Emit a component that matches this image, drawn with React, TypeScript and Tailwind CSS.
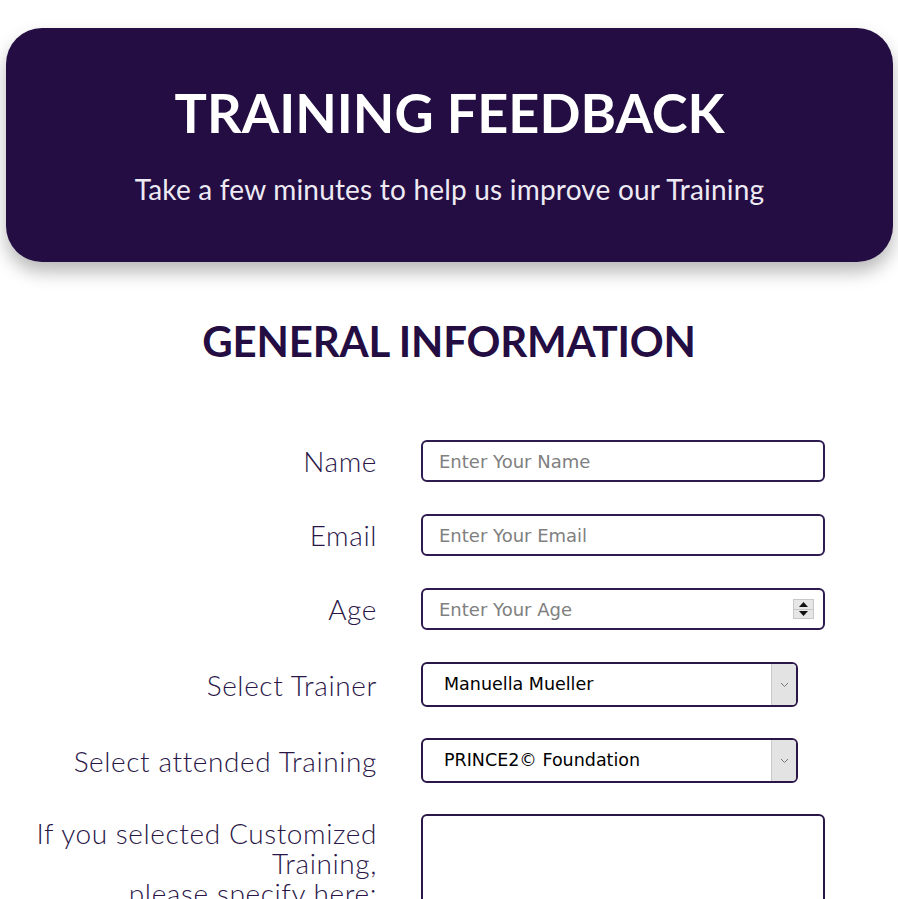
import React from 'react';

const LABEL_FONT = "font-['Lato','Noto_Sans',sans-serif]";
const FIELD_FONT = "font-['DejaVu_Sans','Liberation_Sans',sans-serif]";

function Row({ label, children, top = false }: { label: React.ReactNode; children: React.ReactNode; top?: boolean }) {
  return (
    <div className={`flex ${top ? 'items-start' : 'items-center'}`}>
      <div className={`w-[377px] text-right text-[28px] leading-[30px] font-light tracking-[0.6px] text-[#2a1748] ${LABEL_FONT}`}>
        {label}
      </div>
      <div className="ml-[44px]">{children}</div>
    </div>
  );
}

function TextInput({ placeholder, spinner = false }: { placeholder: string; spinner?: boolean }) {
  return (
    <div className="relative w-[404px] h-[42px]">
      <input
        type="text"
        placeholder={placeholder}
        className={`w-full h-full rounded-[6px] border-2 border-[#2e1b50] bg-white pl-[16px] pr-[40px] text-[18px] text-black placeholder:text-[#808080] outline-none ${FIELD_FONT}`}
      />
      {spinner && (
        <div className="absolute right-[11px] top-[11px] w-[21px] h-[20px] flex flex-col border border-[#c8c8c8] bg-[#e6e6e6]">
          <div className="flex-1 flex items-center justify-center border-b border-[#c8c8c8]">
            <svg width="9" height="5" viewBox="0 0 9 5"><path d="M0 5 L4.5 0 L9 5 Z" fill="#111" /></svg>
          </div>
          <div className="flex-1 flex items-center justify-center">
            <svg width="9" height="5" viewBox="0 0 9 5"><path d="M0 0 L4.5 5 L9 0 Z" fill="#111" /></svg>
          </div>
        </div>
      )}
    </div>
  );
}

function FakeSelect({ value }: { value: string }) {
  return (
    <div className="flex w-[377px] h-[45px] rounded-[6px] border-2 border-[#2a1748] bg-white overflow-hidden">
      <div className={`flex-1 flex items-center pl-[21px] text-[17.5px] text-black ${FIELD_FONT}`}>{value}</div>
      <div className="w-[25px] h-full flex items-center justify-center bg-[#e3e3e3] border-l border-[#c9c9c9]">
        <svg width="9" height="6" viewBox="0 0 9 6">
          <path d="M1 1 L4.5 4.5 L8 1" fill="none" stroke="#777" strokeWidth="1" />
        </svg>
      </div>
    </div>
  );
}

export default function App() {
  return (
    <div className="min-h-screen bg-white overflow-hidden">
      <header className="mx-[6px] mt-[28px] mr-[5px] h-[234px] rounded-[36px] bg-[#230d42] shadow-[0_10px_18px_rgba(0,0,0,0.28)] flex flex-col items-center">
        <h1 className={`mt-[58px] text-[54px] leading-none font-bold text-white tracking-[0px] ${LABEL_FONT}`}>
          TRAINING FEEDBACK
        </h1>
        <p className={`mt-[35px] text-[28px] leading-none font-normal tracking-[0.2px] text-[#eeeaf4] ${LABEL_FONT}`}>
          Take a few minutes to help us improve our Training
        </p>
      </header>

      <h2 className={`mt-[58px] text-center text-[42px] leading-none font-bold text-[#230d42] tracking-[-0.2px] ${LABEL_FONT}`}>
        GENERAL INFORMATION
      </h2>

      <form className="mt-[78px] flex flex-col">
        <Row label="Name">
          <TextInput placeholder="Enter Your Name" />
        </Row>
        <div className="h-[32px]" />
        <Row label="Email">
          <TextInput placeholder="Enter Your Email" />
        </Row>
        <div className="h-[32px]" />
        <Row label="Age">
          <TextInput placeholder="Enter Your Age" spinner />
        </Row>
        <div className="h-[32px]" />
        <Row label="Select Trainer">
          <FakeSelect value="Manuella Mueller" />
        </Row>
        <div className="h-[31px]" />
        <Row label="Select attended Training">
          <FakeSelect value="PRINCE2© Foundation" />
        </Row>
        <div className="h-[31px]" />
        <Row
          top
          label={
            <div className="pt-[4px]">
              If you selected Customized
              <br />
              Training,
              <br />
              please specify here:
            </div>
          }
        >
          <textarea className="block w-[404px] h-[110px] rounded-[6px] border-2 border-[#2a1748] bg-white resize-y outline-none" />
        </Row>
      </form>
    </div>
  );
}
